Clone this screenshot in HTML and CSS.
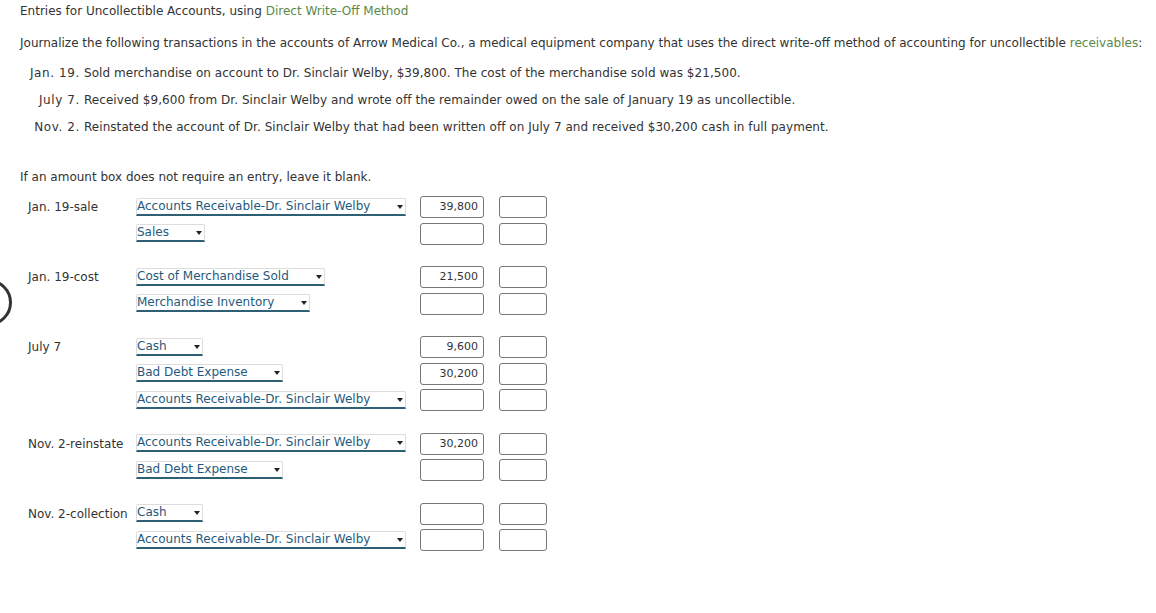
FILE: index.html
```html
<!DOCTYPE html>
<html>
<head>
<meta charset="utf-8">
<link rel="stylesheet" href="styles.css">
</head>
<body>
<div class="ring"></div>
<div class="page">
  <div class="title">Entries for Uncollectible Accounts, using <span class="green">Direct Write-Off Method</span></div>
  <p class="intro">Journalize the following transactions in the accounts of Arrow Medical Co., a medical equipment company that uses the direct write-off method of accounting for uncollectible <span class="green">receivables</span>:</p>
  <div class="items">
    <div class="idate">Jan. 19.</div><div class="itext">Sold merchandise on account to Dr. Sinclair Welby, $39,800. The cost of the merchandise sold was $21,500.</div>
    <div class="idate">July 7.</div><div class="itext">Received $9,600 from Dr. Sinclair Welby and wrote off the remainder owed on the sale of January 19 as uncollectible.</div>
    <div class="idate">Nov. 2.</div><div class="itext">Reinstated the account of Dr. Sinclair Welby that had been written off on July 7 and received $30,200 cash in full payment.</div>
  </div>
  <p class="note">If an amount box does not require an entry, leave it blank.</p>

  <div class="journal">
    <div class="group">
      <div class="row">
        <div class="lbl">Jan. 19-sale</div>
        <div class="acct"><span class="sel w-ar">Accounts Receivable-Dr. Sinclair Welby<span class="arr"></span></span></div>
        <div class="box dr">39,800</div><div class="box cr"></div>
      </div>
      <div class="row">
        <div class="lbl"></div>
        <div class="acct"><span class="sel w-sales">Sales<span class="arr"></span></span></div>
        <div class="box dr"></div><div class="box cr"></div>
      </div>
    </div>
    <div class="group">
      <div class="row">
        <div class="lbl">Jan. 19-cost</div>
        <div class="acct"><span class="sel w-cms">Cost of Merchandise Sold<span class="arr"></span></span></div>
        <div class="box dr">21,500</div><div class="box cr"></div>
      </div>
      <div class="row">
        <div class="lbl"></div>
        <div class="acct"><span class="sel w-mi">Merchandise Inventory<span class="arr"></span></span></div>
        <div class="box dr"></div><div class="box cr"></div>
      </div>
    </div>
    <div class="group">
      <div class="row">
        <div class="lbl">July 7</div>
        <div class="acct"><span class="sel w-cash">Cash<span class="arr"></span></span></div>
        <div class="box dr">9,600</div><div class="box cr"></div>
      </div>
      <div class="row">
        <div class="lbl"></div>
        <div class="acct"><span class="sel w-bde">Bad Debt Expense<span class="arr"></span></span></div>
        <div class="box dr">30,200</div><div class="box cr"></div>
      </div>
      <div class="row">
        <div class="lbl"></div>
        <div class="acct"><span class="sel w-ar">Accounts Receivable-Dr. Sinclair Welby<span class="arr"></span></span></div>
        <div class="box dr"></div><div class="box cr"></div>
      </div>
    </div>
    <div class="group">
      <div class="row">
        <div class="lbl">Nov. 2-reinstate</div>
        <div class="acct"><span class="sel w-ar">Accounts Receivable-Dr. Sinclair Welby<span class="arr"></span></span></div>
        <div class="box dr">30,200</div><div class="box cr"></div>
      </div>
      <div class="row">
        <div class="lbl"></div>
        <div class="acct"><span class="sel w-bde">Bad Debt Expense<span class="arr"></span></span></div>
        <div class="box dr"></div><div class="box cr"></div>
      </div>
    </div>
    <div class="group">
      <div class="row">
        <div class="lbl">Nov. 2-collection</div>
        <div class="acct"><span class="sel w-cash">Cash<span class="arr"></span></span></div>
        <div class="box dr"></div><div class="box cr"></div>
      </div>
      <div class="row">
        <div class="lbl"></div>
        <div class="acct"><span class="sel w-ar">Accounts Receivable-Dr. Sinclair Welby<span class="arr"></span></span></div>
        <div class="box dr"></div><div class="box cr"></div>
      </div>
    </div>
  </div>
</div>
</body>
</html>
```

FILE: styles.css
```css
html, body {
  margin: 0;
  padding: 0;
  background: #fff;
}
body {
  font-family: Verdana, "DejaVu Sans", sans-serif;
  font-size: 12px;
  color: #333;
  position: relative;
  overflow: hidden;
  width: 1156px;
  height: 613px;
}
.ring {
  position: absolute;
  left: -35px;
  top: 279px;
  width: 41px;
  height: 41px;
  border: 3px solid #333;
  border-radius: 50%;
}
.page {
  padding: 3px 0 0 20px;
}
.title {
  line-height: 16px;
}
.green {
  color: #5a8a4a;
}
.intro {
  margin: 16px 0 0 0;
  line-height: 16px;
  white-space: nowrap;
}
.items {
  display: grid;
  grid-template-columns: 60px auto;
  column-gap: 4px;
  row-gap: 11px;
  margin-top: 14px;
  line-height: 16px;
  letter-spacing: 0.05px;
}
.idate {
  text-align: right;
  letter-spacing: 0.6px;
}
.note {
  margin: 34px 0 0 0;
  line-height: 16px;
}
.journal {
  margin-top: 11px;
  padding-left: 8px;
}
.group {
  display: flex;
  flex-direction: column;
  gap: 4.5px;
  margin-bottom: 21.5px;
}
.row {
  display: flex;
  align-items: center;
  height: 22px;
}
.lbl {
  width: 108px;
  flex: none;
}
.acct {
  width: 284px;
  flex: none;
}
.sel {
  display: inline-block;
  position: relative;
  box-sizing: border-box;
  height: 18px;
  line-height: 15px;
  padding-left: 0;
  color: #1f5a7c;
  border: 1px solid #ddd;
  border-bottom: 2px solid #2e5f75;
  border-radius: 2px 2px 0 0;
  margin-top: -2px;
  white-space: nowrap;
}
.arr {
  position: absolute;
  right: 2px;
  top: 6px;
  width: 0;
  height: 0;
  border-left: 3.5px solid transparent;
  border-right: 3.5px solid transparent;
  border-top: 4px solid #222;
}
.w-ar { width: 270px; }
.w-sales { width: 69px; }
.w-cms { width: 189px; }
.w-mi { width: 174px; }
.w-cash { width: 67px; }
.w-bde { width: 147px; }
.box {
  box-sizing: border-box;
  height: 22px;
  border: 1px solid #777;
  border-radius: 3px;
  font-size: 11px;
  line-height: 20px;
  text-align: right;
  padding-right: 5px;
  color: #333;
  flex: none;
}
.dr {
  width: 64px;
}
.cr {
  width: 48px;
  margin-left: 15px;
}
```
